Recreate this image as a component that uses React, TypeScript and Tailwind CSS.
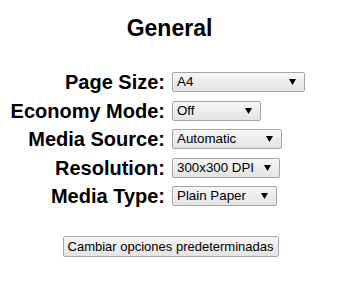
import React from "react";

const rows: { label: string; value: string; w: number }[] = [
  { label: "Page Size:", value: "A4", w: 133 },
  { label: "Economy Mode:", value: "Off", w: 89 },
  { label: "Media Source:", value: "Automatic", w: 110 },
  { label: "Resolution:", value: "300x300 DPI", w: 108 },
  { label: "Media Type:", value: "Plain Paper", w: 105 },
];

function FakeSelect({ value, w }: { value: string; w: number }) {
  return (
    <div
      className="flex items-center justify-between h-[20px] border border-[#a6a6a6] rounded-[2px] bg-gradient-to-b from-[#f6f6f6] to-[#e3e3e3] pl-[4px] pr-[8px] text-[13.33px] text-black leading-none"
      style={{ width: w }}
    >
      <span>{value}</span>
      <svg width="7" height="6" viewBox="0 0 7 6">
        <path d="M0 0 H7 L3.5 6 Z" fill="#000" />
      </svg>
    </div>
  );
}

export default function App() {
  return (
    <div className="w-[337px] h-[283px] bg-white text-black font-['Liberation_Sans',Arial,sans-serif]">
      <h2 className="pt-[14px] text-center text-[23px] font-bold leading-[28px] pl-[2px]">General</h2>
      <div className="mt-[30px] grid grid-cols-[165px_auto] gap-x-[7px] gap-y-[8.5px] items-center">
        {rows.map((r) => (
          <React.Fragment key={r.label}>
            <div className="text-right text-[20px] font-bold leading-[20px] whitespace-nowrap">{r.label}</div>
            <FakeSelect value={r.value} w={r.w} />
          </React.Fragment>
        ))}
      </div>
      <div className="mt-[30px] flex justify-center pl-[4px]">
        <div className="h-[21px] w-[216px] flex items-center justify-center border border-[#a6a6a6] rounded-[2px] bg-gradient-to-b from-[#f6f6f6] to-[#e3e3e3] text-[13px] leading-none whitespace-nowrap">
          Cambiar opciones predeterminadas
        </div>
      </div>
    </div>
  );
}
